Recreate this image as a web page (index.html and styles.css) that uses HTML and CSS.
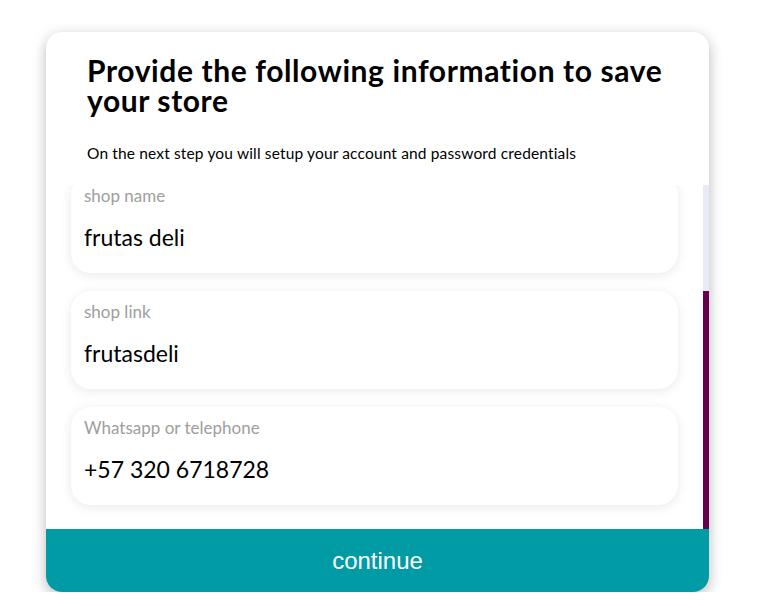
FILE: index.html
```html
<!DOCTYPE html>
<html>
<head>
<meta charset="utf-8">
<link rel="stylesheet" href="styles.css">
</head>
<body>
<div class="page">
  <div class="card">
    <div class="header">
      <h1 class="title">Provide the following information to save your store</h1>
      <p class="subtitle">On the next step you will setup your account and password credentials</p>
    </div>
    <div class="body">
      <div class="scroller">
        <div class="fields">
          <div class="field">
            <div class="label">shop name</div>
            <div class="value">frutas deli</div>
          </div>
          <div class="field">
            <div class="label">shop link</div>
            <div class="value">frutasdeli</div>
          </div>
          <div class="field">
            <div class="label">Whatsapp or telephone</div>
            <div class="value">+57 320 6718728</div>
          </div>
        </div>
      </div>
      <div class="track"><div class="thumb"></div></div>
    </div>
    <button class="continue">continue</button>
  </div>
</div>
</body>
</html>
```
FILE: styles.css
```css
html, body {
  margin: 0;
  padding: 0;
  background: #ffffff;
}
body {
  font-family: Lato, "Open Sans", sans-serif;
}
.page {
  padding: 32px 0 0 46px;
}
.card {
  width: 663px;
  height: 560px;
  background: #ffffff;
  border-radius: 16px;
  box-shadow: 0 4px 14px rgba(0, 0, 0, 0.28);
  overflow: hidden;
  display: flex;
  flex-direction: column;
}
.header {
  height: 153px;
  box-sizing: border-box;
  padding: 23px 30px 0 41px;
  flex: none;
}
.title {
  margin: 0;
  font-size: 30px;
  line-height: 30px;
  font-weight: 700;
  letter-spacing: 0.6px;
  color: #000;
}
.subtitle {
  margin: 28px 0 0;
  font-size: 15.5px;
  line-height: 20px;
  letter-spacing: 0.15px;
  color: #000;
}
.body {
  flex: 1;
  min-height: 0;
  display: flex;
}
.scroller {
  flex: 1;
  overflow: hidden;
  display: flex;
  flex-direction: column-reverse;
}
.track {
  flex: none;
  width: 6px;
  background: #e8eaf6;
  display: flex;
  flex-direction: column;
  padding-top: 106px;
  box-sizing: border-box;
}
.thumb {
  flex: 1;
  background: #66004a;
}
.fields {
  flex: none;
  padding: 143px 25px 24px 25px;
  display: flex;
  flex-direction: column;
  gap: 18px;
}
.field {
  height: 98px;
  box-sizing: border-box;
  padding: 11px 13px 0;
  background: #fff;
  border-radius: 20px;
  box-shadow: 0 2px 12px rgba(0, 0, 0, 0.09);
}
.label {
  font-size: 17px;
  line-height: 20px;
  color: #9e9e9e;
}
.value {
  margin-top: 17px;
  font-size: 23px;
  line-height: 28px;
  color: #000;
}
.continue {
  flex: none;
  height: 63px;
  border: 0;
  margin: 0;
  background: #009ba5;
  color: #fff;
  font-family: "Liberation Sans", Arial, sans-serif;
  font-size: 24px;
  cursor: pointer;
}
```
